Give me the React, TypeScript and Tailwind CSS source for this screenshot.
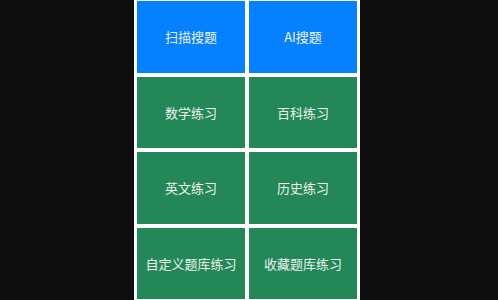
import React from "react";

const items: { label: string; blue?: boolean }[] = [
  { label: "扫描搜题", blue: true },
  { label: "AI搜题", blue: true },
  { label: "数学练习" },
  { label: "百科练习" },
  { label: "英文练习" },
  { label: "历史练习" },
  { label: "自定义题库练习" },
  { label: "收藏题库练习" },
];

export default function App() {
  return (
    <div className="h-[300px] w-full bg-[#0f0f0f] flex pl-[134px] overflow-hidden">
      <div className="w-[226px] h-[300px] bg-white px-[3px] pt-[1px] grid grid-cols-2 gap-[4px] content-start">
        {items.map((it) => (
          <div
            key={it.label}
            className={
              "h-[71.5px] flex items-center justify-center text-[13px] font-normal text-[#edf2ef] " +
              (it.blue ? "bg-[#0580fe]" : "bg-[#238758]")
            }
            style={{ fontFamily: '"Noto Sans CJK SC", "Noto Sans", sans-serif' }}
          >
            {it.label}
          </div>
        ))}
      </div>
    </div>
  );
}
